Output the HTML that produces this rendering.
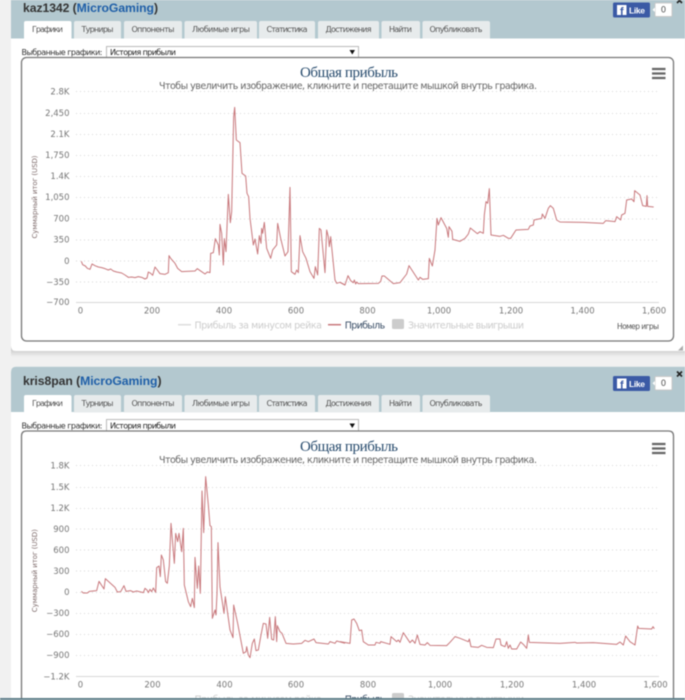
<!DOCTYPE html>
<html><head><meta charset="utf-8"><style>
html,body{margin:0;padding:0;background:#f1f1f1;width:685px;height:700px;overflow:hidden}
svg{display:block;filter:blur(.4px)}
text{font-family:"DejaVu Sans",sans-serif}
.n{font-family:"Liberation Sans",sans-serif;font-weight:bold;font-size:12.2px;fill:#333}
.n tspan{fill:#1f5fa8}
.t{font-size:8px;fill:#555;text-anchor:middle}
.l{font-size:8px;fill:#333}
.ti{font-family:"Liberation Serif",serif;font-size:15px;fill:#274b6d;text-anchor:middle}
.s{font-size:9.500px;fill:#666;text-anchor:middle}
.y{font-size:8.500px;fill:#777;text-anchor:end}
.x{font-size:8.500px;fill:#777;text-anchor:middle}
.a{font-size:7px;fill:#7d6a6a;text-anchor:middle}
.g{font-size:9.500px;fill:#ccc}
.p{font-size:9.500px;fill:#3c5068}
.no{font-size:7.500px;fill:#555}
.f{font-family:"Liberation Sans",sans-serif;font-weight:bold}
.grid{stroke:#d8d8d8;stroke-width:1;stroke-dasharray:1 3;fill:none}
.ln{fill:none;stroke:#c8787c;stroke-width:3;stroke-linejoin:round}
</style></head><body>
<svg width="685" height="700" viewBox="0 0 685 700" xmlns="http://www.w3.org/2000/svg">
<defs><linearGradient id="sh" x1="0" y1="0" x2="0" y2="1"><stop offset="0" stop-color="#b5b5b5"/><stop offset="1" stop-color="#f1f1f1"/></linearGradient></defs>

<!-- panel 1 -->
<rect x="0" y="0" width="685" height="700" fill="#f1f1f1"/>
<rect x="11" y="345" width="674" height="12" fill="url(#sh)"/>
<path d="M11 0H685V351H16Q11 351 11 346Z" fill="#fff"/>
<rect x="11" y="0" width="674" height="38.500" fill="#b3c8cf"/>
<text class="n" x="23" y="12" textLength="135">kaz1342 (<tspan>MicroGaming</tspan>)</text>

<g fill="#e7ebec">
<path d="M24 38.500V23Q24 21 26 21H69.500Q71.500 21 71.500 23V38.500Z" fill="#fff"/>
<path d="M74 38.500V23Q74 21 76 21H119Q121 21 121 23V38.500Z"/>
<path d="M124 38.500V23Q124 21 126 21H180Q182 21 182 23V38.500Z"/>
<path d="M184.500 38.500V23Q184.500 21 186.500 21H255Q257 21 257 23V38.500Z"/>
<path d="M259 38.500V23Q259 21 261 21H313Q315 21 315 23V38.500Z"/>
<path d="M318 38.500V23Q318 21 320 21H377Q379 21 379 23V38.500Z"/>
<path d="M381.500 38.500V23Q381.500 21 383.500 21H418Q420 21 420 23V38.500Z"/>
<path d="M422.500 38.500V23Q422.500 21 424.500 21H488Q490 21 490 23V38.500Z"/>
</g>
<text class="t" x="47.500" y="32" textLength="31">Графики</text>
<text class="t" x="97.500" y="32" textLength="32">Турниры</text>
<text class="t" x="153" y="32" textLength="43">Оппоненты</text>
<text class="t" x="221" y="32" textLength="58">Любимые игры</text>
<text class="t" x="287" y="32" textLength="41">Статистика</text>
<text class="t" x="348.500" y="32" textLength="46">Достижения</text>
<text class="t" x="400.500" y="32" textLength="23">Найти</text>
<text class="t" x="456" y="32" textLength="53">Опубликовать</text>

<text class="l" x="21.500" y="55" textLength="81">Выбранные графики:</text>
<rect x="106.500" y="46.500" width="252" height="11" fill="#fff" stroke="#bbb"/>
<text class="l" x="110" y="55" textLength="66" style="fill:#222">История прибыли</text>
<path d="M349.500 50H355L352.300 54.500Z" fill="#111"/>

<rect x="21.500" y="57.500" width="652" height="283.500" rx="5" fill="#fff" stroke="#777" stroke-width="1.300"/>
<text class="ti" x="349" y="77" textLength="98">Общая прибыль</text>
<text class="s" x="348" y="89" textLength="378">Чтобы увеличить изображение, кликните и перетащите мышкой внутрь графика.</text>
<path d="M652 69h13.500M652 73.500h13.500M652 78h13.500" stroke="#666" stroke-width="2.200" fill="none"/>

<path class="grid" d="M76 91.500H659M76 113.500H659M76 134.500H659M76 155.500H659M76 176.500H659M76 197.500H659M76 219H659M76 240H659M76 261H659M76 282H659"/>
<path d="M76 302.500H659" stroke="#d8d8d8" fill="none"/>
<text class="y" x="69.500" y="94.500">2.8K</text>
<text class="y" x="69.500" y="116">2,450</text>
<text class="y" x="69.500" y="137">2.1K</text>
<text class="y" x="69.500" y="158">1,750</text>
<text class="y" x="69.500" y="179">1.4K</text>
<text class="y" x="69.500" y="200">1,050</text>
<text class="y" x="69.500" y="221.500">700</text>
<text class="y" x="69.500" y="242.500">350</text>
<text class="y" x="69.500" y="264">0</text>
<text class="y" x="69.500" y="285">−350</text>
<text class="y" x="69.500" y="305">−700</text>
<text class="x" x="80.500" y="313.500">0</text>
<text class="x" x="152" y="313.500">200</text>
<text class="x" x="224" y="313.500">400</text>
<text class="x" x="296" y="313.500">600</text>
<text class="x" x="367.500" y="313.500">800</text>
<text class="x" x="439" y="313.500">1,000</text>
<text class="x" x="511" y="313.500">1,200</text>
<text class="x" x="582.500" y="313.500">1,400</text>
<text class="x" x="654" y="313.500">1,600</text>
<text class="a" transform="translate(37 197) rotate(-90)" textLength="83">Суммарный итог (USD)</text>

<g transform="scale(.33333) translate(0 270)">
<polyline class="ln" points="244,514 248,524 256,528 262,535 270,538 276,522 285,527 295,531 305,533 315,536 325,540 332,537 340,543 350,546 365,549 375,555 385,562 395,561 405,563 415,560 425,562 435,567 441,564 445,546 452,550 458,556 465,531 472,540 480,551 495,553 505,548 507,497 512,505 525,520 533,535 545,545 560,544 585,543 592,536 605,545 615,552 622,546 630,548 632,490 640,488 646,446 655,465 658,495 660,403 665,430 670,525 673,446 678,485 685,313 691,398 695,365 701,80 704,52 709,150 720,158 726,250 737,258 741,310 746,320 750,385 760,465 765,447 773,492 778,437 783,460 785,415 788,430 793,397 800,475 812,505 818,480 830,465 833,400 842,445 855,498 864,485 870,292 874,545 885,553 890,540 895,548 900,437 908,485 918,505 930,545 942,565 946,530 953,555 958,415 963,420 975,548 980,420 985,440 988,470 992,440 998,500 1005,570 1010,580 1020,577 1035,585"/>
<g transform="translate(1020 0)"><polyline class="ln" points="0,577 15,585 24,557 32,572 40,578 43,570 47,582 50,576 55,581 115,580 122,574 126,558 133,558 160,581 180,578 200,552 207,527 235,570 240,562 248,568 265,566 268,505 277,528 285,480 291,385 295,405 303,383 320,415 325,442 327,410 336,424 338,448 360,454 375,445 385,432 391,414 412,431 420,425 430,430 433,375 438,335 443,340 448,296 453,435 480,439 490,436 505,445 512,445 528,420 565,418 570,408 580,405 582,390 605,385 607,372 615,385 625,355 631,347 640,355 650,390 660,396 730,397 790,400 797,392 825,395 830,380 842,390 845,375 855,370 860,330 875,327 882,335 884,302 900,315 908,347 919,349 921,317 923,349 941,351"/></g>
</g>

<path d="M178 324.700H191" stroke="#ddd" stroke-width="1.500"/>
<text class="g" x="194.500" y="328.500" textLength="127.500">Прибыль за минусом рейка</text>
<path d="M328 324.700H341" stroke="#c8787c" stroke-width="1.500"/>
<text class="p" x="344.700" y="328.500" textLength="40.500">Прибыль</text>
<rect x="392" y="319" width="12" height="10" rx="1.500" fill="#ccc"/>
<text class="g" x="408" y="328.500" textLength="116">Значительные выигрыши</text>
<text class="no" x="617" y="329" textLength="42">Номер игры</text>
<path d="M683 345.500V350.500H678Z" fill="#aaa"/>

<rect x="613" y="2.500" width="37" height="15" rx="1.500" fill="#3b5aa5"/>
<rect x="617" y="5" width="9.500" height="10" fill="#fff"/>
<text class="f" x="620" y="15" font-size="11" fill="#3b5aa5">f</text>
<text class="f" x="629" y="13.500" font-size="8.500" fill="#fff" textLength="16">Like</text>
<rect x="655" y="3" width="17" height="13.500" rx="1" fill="#fff" stroke="#c8c8c8"/>
<path d="M655 7.500L652.500 9.700L655 12Z" fill="#fff"/>
<text x="663.500" y="12.500" font-size="8.500" fill="#555" text-anchor="middle">0</text>
<path d="M677 -2L682 3M682 -2L677 3" stroke="#222" stroke-width="1.600"/>

<!-- panel 2 -->
<path d="M11 700V372Q11 366.700 16 366.700H685V700Z" fill="#fff"/>
<path d="M11 412V372Q11 366.700 16 366.700H685V412Z" fill="#b3c8cf"/>
<text class="n" x="23" y="385" textLength="138.500">kris8pan (<tspan>MicroGaming</tspan>)</text>

<g transform="translate(0 374)" fill="#e7ebec">
<path d="M24 38.500V23Q24 21 26 21H69.500Q71.500 21 71.500 23V38.500Z" fill="#fff"/>
<path d="M74 38.500V23Q74 21 76 21H119Q121 21 121 23V38.500Z"/>
<path d="M124 38.500V23Q124 21 126 21H180Q182 21 182 23V38.500Z"/>
<path d="M184.500 38.500V23Q184.500 21 186.500 21H255Q257 21 257 23V38.500Z"/>
<path d="M259 38.500V23Q259 21 261 21H313Q315 21 315 23V38.500Z"/>
<path d="M318 38.500V23Q318 21 320 21H377Q379 21 379 23V38.500Z"/>
<path d="M381.500 38.500V23Q381.500 21 383.500 21H418Q420 21 420 23V38.500Z"/>
<path d="M422.500 38.500V23Q422.500 21 424.500 21H488Q490 21 490 23V38.500Z"/>
</g>
<text class="t" x="47.500" y="406" textLength="31">Графики</text>
<text class="t" x="97.500" y="406" textLength="32">Турниры</text>
<text class="t" x="153" y="406" textLength="43">Оппоненты</text>
<text class="t" x="221" y="406" textLength="58">Любимые игры</text>
<text class="t" x="287" y="406" textLength="41">Статистика</text>
<text class="t" x="348.500" y="406" textLength="46">Достижения</text>
<text class="t" x="400.500" y="406" textLength="23">Найти</text>
<text class="t" x="456" y="406" textLength="53">Опубликовать</text>

<text class="l" x="21.500" y="428.500" textLength="81">Выбранные графики:</text>
<rect x="106.500" y="419.500" width="252" height="11.500" fill="#fff" stroke="#bbb"/>
<text class="l" x="110" y="428.500" textLength="66" style="fill:#222">История прибыли</text>
<path d="M349.500 423.500H355L352.300 428Z" fill="#111"/>

<path d="M21.500 705V436Q21.500 431 26.500 431H668.500Q673.500 431 673.500 436V705Z" fill="#fff" stroke="#777" stroke-width="1.300"/>
<text class="ti" x="349" y="451" textLength="98">Общая прибыль</text>
<text class="s" x="348" y="463" textLength="378">Чтобы увеличить изображение, кликните и перетащите мышкой внутрь графика.</text>
<path d="M652 444h13.500M652 448.500h13.500M652 453h13.500" stroke="#666" stroke-width="2.200" fill="none"/>

<path class="grid" d="M76 465.500H659M76 487.500H659M76 508.500H659M76 529H659M76 550H659M76 571H659M76 592.500H659M76 613.500H659M76 634.500H659M76 655.500H659"/>
<path d="M76 676.500H659" stroke="#d8d8d8" fill="none"/>
<text class="y" x="69.500" y="468.500">1.8K</text>
<text class="y" x="69.500" y="490">1.5K</text>
<text class="y" x="69.500" y="511">1.2K</text>
<text class="y" x="69.500" y="532">900</text>
<text class="y" x="69.500" y="553">600</text>
<text class="y" x="69.500" y="574">300</text>
<text class="y" x="69.500" y="595">0</text>
<text class="y" x="69.500" y="616">−300</text>
<text class="y" x="69.500" y="637">−600</text>
<text class="y" x="69.500" y="658">−900</text>
<text class="y" x="69.500" y="679.500">−1.2K</text>
<text class="x" x="80.500" y="687.500">0</text>
<text class="x" x="152.500" y="687.500">200</text>
<text class="x" x="224.500" y="687.500">400</text>
<text class="x" x="296" y="687.500">600</text>
<text class="x" x="368" y="687.500">800</text>
<text class="x" x="440" y="687.500">1,000</text>
<text class="x" x="512" y="687.500">1,200</text>
<text class="x" x="584" y="687.500">1,400</text>
<text class="x" x="655.500" y="687.500">1,600</text>
<text class="a" transform="translate(37 570.700) rotate(-90)" textLength="83">Суммарный итог (USD)</text>

<g transform="scale(.33333) translate(0 1380)">
<polyline class="ln" points="244,394 250,399 262,399 268,394 290,392 297,364 312,387 316,356 345,382 352,396 362,395 372,377 378,394 392,392 400,396 410,393 430,398 435,385 441,390 445,398 450,388 455,395 460,384 467,397 470,323 477,318 481,350 484,285 490,300 497,365 502,370 508,317 513,190 523,310 527,220 533,245 537,220 545,275 550,205 553,375 565,425 572,440 577,415 583,443 585,292 592,385 596,318 601,400 606,93 611,218 617,50 625,135 630,197 634,200 637,475 645,450 648,465 651,400 654,248 660,380 672,460 676,410 690,510 699,533 701,435 713,490 730,580 738,575 740,560 745,585 750,593 757,550 763,537 768,572 775,570 783,525 790,490 798,492 803,535 809,472 815,538 821,540 826,470 830,545 832,497 840,515 846,520 858,550 880,552 905,550 915,541 925,545 942,537 948,548 985,552 990,545 1005,550 1010,543 1035,550"/>
<g transform="translate(1020 0)"><polyline class="ln" points="0,545 30,550 35,480 42,477 50,490 58,512 65,510 70,545 85,555 105,555 108,547 120,550 122,545 150,553 153,530 170,545 175,540 180,547 190,518 210,548 217,540 225,550 232,525 240,553 255,555 262,548 270,556 320,557 330,547 345,530 360,535 385,545 388,537 393,560 415,562 425,556 440,562 460,563 468,537 480,537 483,555 495,560 500,545 505,565 510,555 515,567 530,567 542,546 550,553 560,565 565,525 568,547 660,550 705,547 710,549 760,548 830,553 840,546 850,555 857,528 870,545 885,555 893,498 896,505 935,507 939,500 943,506"/></g>
</g>

<path d="M331 699H345" stroke="#c8787c" stroke-width="2"/>
<text class="g" x="194.500" y="702.500" textLength="127.500">Прибыль за минусом рейка</text>
<text class="p" x="344.700" y="702.500" textLength="40.500">Прибыль</text>
<rect x="392" y="693" width="12" height="10" rx="1.500" fill="#ccc"/>
<text class="g" x="408" y="702.500" textLength="116">Значительные выигрыши</text>

<rect x="613" y="376" width="37" height="15" rx="1.500" fill="#3b5aa5"/>
<rect x="617" y="378.500" width="9.500" height="10" fill="#fff"/>
<text class="f" x="620" y="388.500" font-size="11" fill="#3b5aa5">f</text>
<text class="f" x="629" y="387" font-size="8.500" fill="#fff" textLength="16">Like</text>
<rect x="655" y="376.500" width="17" height="13.500" rx="1" fill="#fff" stroke="#c8c8c8"/>
<path d="M655 381L652.500 383.200L655 385.500Z" fill="#fff"/>
<text x="663.500" y="386" font-size="8.500" fill="#555" text-anchor="middle">0</text>
<path d="M677 371.500L682 376.500M682 371.500L677 376.500" stroke="#222" stroke-width="1.600"/>

<rect x="0" y="698" width="685" height="2" fill="#5f7f8a"/>
</svg>
</body></html>
